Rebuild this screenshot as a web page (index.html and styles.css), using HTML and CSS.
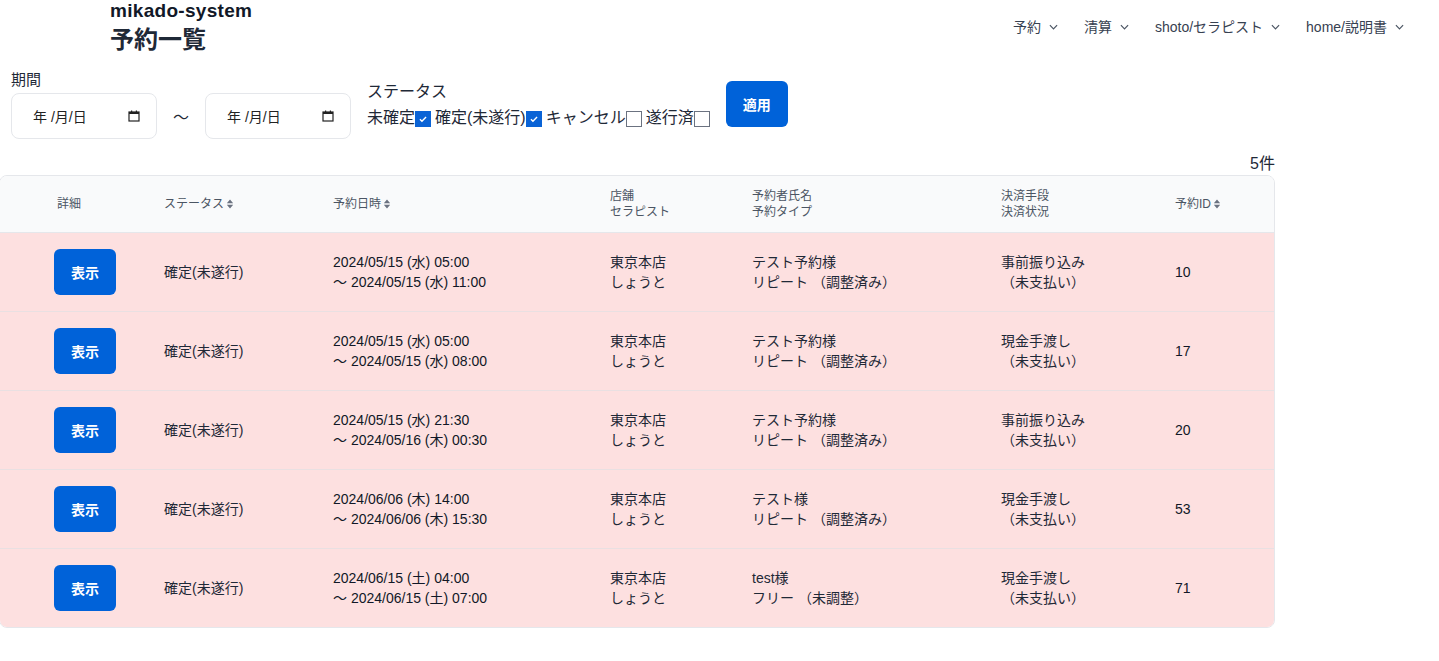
FILE: index.html
```html
<!DOCTYPE html>
<html lang="ja">
<head>
<meta charset="utf-8">
<title>予約一覧</title>
<link rel="stylesheet" href="styles.css">
</head>
<body>
<header class="topbar">
  <div class="brand">
    <div class="site">mikado-system</div>
    <h1 class="title">予約一覧</h1>
  </div>
  <nav class="nav">
    <span class="nav-item">予約<svg class="chev" viewBox="0 0 10 6"><path d="M1 1l4 4 4-4" fill="none" stroke="currentColor" stroke-width="1.3"/></svg></span>
    <span class="nav-item">清算<svg class="chev" viewBox="0 0 10 6"><path d="M1 1l4 4 4-4" fill="none" stroke="currentColor" stroke-width="1.3"/></svg></span>
    <span class="nav-item">shoto/セラピスト<svg class="chev" viewBox="0 0 10 6"><path d="M1 1l4 4 4-4" fill="none" stroke="currentColor" stroke-width="1.3"/></svg></span>
    <span class="nav-item">home/説明書<svg class="chev" viewBox="0 0 10 6"><path d="M1 1l4 4 4-4" fill="none" stroke="currentColor" stroke-width="1.3"/></svg></span>
  </nav>
</header>

<section class="filters">
  <div class="period">
    <div class="label">期間</div>
    <div class="period-row">
      <div class="date"><span>年 /月/日</span><svg class="cal" viewBox="0 0 12 12"><rect x="1" y="2" width="10" height="9" fill="none" stroke="#222" stroke-width="1.2"/><rect x="1" y="2" width="10" height="2" fill="#222"/><rect x="3" y="0.5" width="1.2" height="2" fill="#222"/><rect x="7.8" y="0.5" width="1.2" height="2" fill="#222"/></svg></div>
      <span class="tilde">〜</span>
      <div class="date"><span>年 /月/日</span><svg class="cal" viewBox="0 0 12 12"><rect x="1" y="2" width="10" height="9" fill="none" stroke="#222" stroke-width="1.2"/><rect x="1" y="2" width="10" height="2" fill="#222"/><rect x="3" y="0.5" width="1.2" height="2" fill="#222"/><rect x="7.8" y="0.5" width="1.2" height="2" fill="#222"/></svg></div>
    </div>
  </div>
  <div class="status">
    <div class="label">ステータス</div>
    <div class="checks">
      <span class="chk-label">未確定</span><span class="box on"><svg viewBox="0 0 16 16"><path d="M4.5 8.3l2.3 2.2 4.7-4.8" fill="none" stroke="#fff" stroke-width="1.6"/></svg></span>
      <span class="chk-label">確定(未遂行)</span><span class="box on"><svg viewBox="0 0 16 16"><path d="M4.5 8.3l2.3 2.2 4.7-4.8" fill="none" stroke="#fff" stroke-width="1.6"/></svg></span>
      <span class="chk-label">キャンセル</span><span class="box"></span>
      <span class="chk-label">遂行済</span><span class="box"></span>
    </div>
  </div>
  <button class="btn apply">適用</button>
</section>

<div class="count-row"><span class="count">5件</span></div>

<div class="table-wrap">
<table class="list">
  <colgroup>
    <col class="c1"><col class="c2"><col class="c3"><col class="c4"><col class="c5"><col class="c6"><col class="c7">
  </colgroup>
  <thead>
    <tr>
      <th class="th-detail">詳細</th>
      <th>ステータス<svg class="sort" viewBox="0 0 8 10"><path d="M4 0.5L7.2 4.2H0.8z M4 9.5L7.2 5.8H0.8z" fill="currentColor"/></svg></th>
      <th>予約日時<svg class="sort" viewBox="0 0 8 10"><path d="M4 0.5L7.2 4.2H0.8z M4 9.5L7.2 5.8H0.8z" fill="currentColor"/></svg></th>
      <th>店舗<br>セラピスト</th>
      <th>予約者氏名<br>予約タイプ</th>
      <th>決済手段<br>決済状況</th>
      <th>予約ID<svg class="sort" viewBox="0 0 8 10"><path d="M4 0.5L7.2 4.2H0.8z M4 9.5L7.2 5.8H0.8z" fill="currentColor"/></svg></th>
    </tr>
  </thead>
  <tbody>
    <tr>
      <td class="td-btn"><button class="btn show">表示</button></td>
      <td>確定(未遂行)</td>
      <td class="dt">2024/05/15 (水) 05:00<br>〜 2024/05/15 (水) 11:00</td>
      <td>東京本店<br>しょうと</td>
      <td>テスト予約様<br>リピート （調整済み）</td>
      <td>事前振り込み<br>（未支払い）</td>
      <td class="id">10</td>
    </tr>
    <tr>
      <td class="td-btn"><button class="btn show">表示</button></td>
      <td>確定(未遂行)</td>
      <td class="dt">2024/05/15 (水) 05:00<br>〜 2024/05/15 (水) 08:00</td>
      <td>東京本店<br>しょうと</td>
      <td>テスト予約様<br>リピート （調整済み）</td>
      <td>現金手渡し<br>（未支払い）</td>
      <td class="id">17</td>
    </tr>
    <tr>
      <td class="td-btn"><button class="btn show">表示</button></td>
      <td>確定(未遂行)</td>
      <td class="dt">2024/05/15 (水) 21:30<br>〜 2024/05/16 (木) 00:30</td>
      <td>東京本店<br>しょうと</td>
      <td>テスト予約様<br>リピート （調整済み）</td>
      <td>事前振り込み<br>（未支払い）</td>
      <td class="id">20</td>
    </tr>
    <tr>
      <td class="td-btn"><button class="btn show">表示</button></td>
      <td>確定(未遂行)</td>
      <td class="dt">2024/06/06 (木) 14:00<br>〜 2024/06/06 (木) 15:30</td>
      <td>東京本店<br>しょうと</td>
      <td>テスト様<br>リピート （調整済み）</td>
      <td>現金手渡し<br>（未支払い）</td>
      <td class="id">53</td>
    </tr>
    <tr>
      <td class="td-btn"><button class="btn show">表示</button></td>
      <td>確定(未遂行)</td>
      <td class="dt">2024/06/15 (土) 04:00<br>〜 2024/06/15 (土) 07:00</td>
      <td>東京本店<br>しょうと</td>
      <td>test様<br>フリー （未調整）</td>
      <td>現金手渡し<br>（未支払い）</td>
      <td class="id">71</td>
    </tr>
  </tbody>
</table>
</div>
</body>
</html>
```

FILE: styles.css
```css
* { box-sizing: border-box; }
html, body { margin: 0; padding: 0; background: #fff; }
body {
  font-family: "Liberation Sans", "Noto Sans CJK JP", sans-serif;
  color: #1f2937;
  width: 1439px;
}

.topbar {
  display: flex;
  justify-content: space-between;
  align-items: flex-start;
  padding-left: 110px;
  padding-right: 35px;
}
.site {
  font-size: 19px;
  font-weight: 700;
  line-height: 22px;
  letter-spacing: 0.3px;
  color: #111827;
}
.title {
  margin: 2px 0 0;
  font-size: 24px;
  font-weight: 700;
  line-height: 32px;
  color: #1f2937;
}
.nav {
  display: flex;
  gap: 26px;
  padding-top: 17px;
}
.nav-item {
  display: flex;
  align-items: center;
  font-size: 14px;
  line-height: 20px;
  color: #374151;
}
.chev { width: 9px; height: 6px; margin-left: 8px; color: #4b5563; }

.filters {
  display: flex;
  align-items: center;
  gap: 16px;
  padding: 14px 0 0 11px;
}
.label { font-size: 16px; line-height: 20px; }
.period .label { font-size: 15px; }
.period-row {
  display: flex;
  align-items: center;
  gap: 16px;
  margin-top: 3px;
}
.date {
  width: 146px;
  height: 46px;
  border: 1px solid #e5e7eb;
  border-radius: 8px;
  display: flex;
  align-items: center;
  justify-content: space-between;
  padding: 0 16px 0 21px;
  font-size: 14px;
  color: #222;
}
.date span { margin-top: -1px; }
.cal { width: 12px; height: 12px; }
.tilde { font-size: 16px; width: 16px; text-align: center; }

.status .label { margin-bottom: 6px; }
.checks {
  display: flex;
  align-items: center;
  font-size: 16px;
  line-height: 20px;
}
.chk-label { margin-left: 4px; }
.chk-label:first-child { margin-left: 0; }
.box {
  width: 16px;
  height: 16px;
  border: 1px solid #6b7280;
  background: #fff;
  display: inline-flex;
  margin-top: 3px;
}
.box.on { background: #0a63d6; border-color: #0a63d6; }
.box svg { width: 14px; height: 14px; }

.btn {
  border: none;
  background: #0062d9;
  color: #fff;
  font-family: inherit;
  font-weight: 700;
  font-size: 14px;
  border-radius: 6px;
  cursor: pointer;
}
.apply { width: 62px; height: 46px; margin-top: -2px; }

.count-row {
  display: flex;
  justify-content: flex-end;
  width: 1275px;
  margin-top: 16px;
  font-size: 16px;
  line-height: 18px;
}

.table-wrap {
  width: 1276px;
  margin-left: -1px;
  border: 1px solid #e5e7eb;
  border-radius: 8px;
  overflow: hidden;
  margin-top: 2px;
}
.list {
  width: 100%;
  border-collapse: collapse;
  table-layout: fixed;
}
.c1 { width: 164px; }
.c2 { width: 169px; }
.c3 { width: 277px; }
.c4 { width: 142px; }
.c5 { width: 249px; }
.c6 { width: 174px; }
.c7 { width: auto; }

thead tr { background: #f9fafb; height: 56px; }
th {
  text-align: left;
  font-weight: 400;
  font-size: 12px;
  line-height: 16px;
  color: #4b5563;
  padding: 0;
  vertical-align: middle;
  border-bottom: 1px solid #e5e7eb;
}
.th-detail { padding-left: 57px; }
.sort { width: 8px; height: 10px; margin-left: 2px; color: #6b7280; vertical-align: -1px; }

tbody tr { background: #fde0e0; height: 79px; }
tbody tr + tr td { border-top: 1px solid #e9e0e2; }
td {
  padding: 0;
  font-size: 14px;
  line-height: 20px;
  color: #1f2937;
  vertical-align: middle;
}
.td-btn { padding-left: 54px; }
.show { width: 62px; height: 46px; display: block; }
.dt, .id { color: #111827; }
```
